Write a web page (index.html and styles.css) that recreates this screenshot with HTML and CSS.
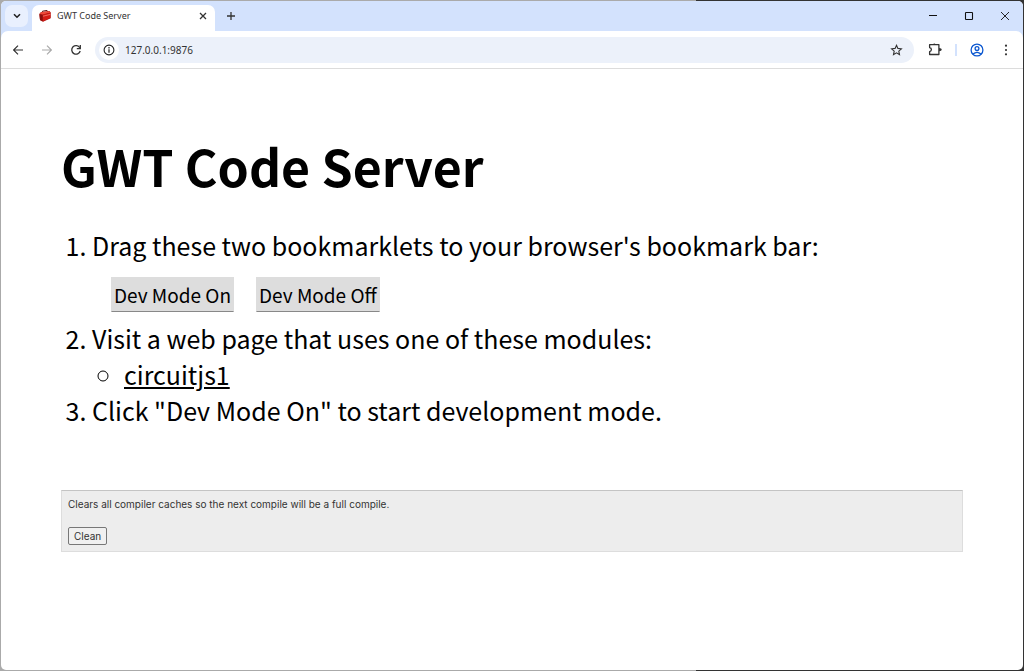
FILE: index.html
```html
<!DOCTYPE html>
<html lang="en">
<head>
<meta charset="utf-8">
<title>GWT Code Server</title>
<link rel="stylesheet" href="styles.css">
</head>
<body>
<div class="window">
  <header class="tab-strip">
    <button class="tab-search" aria-label="Search tabs"><svg width="8" height="6" viewBox="0 0 8 6"><path d="M1 1.2 4 4.2 7 1.2" fill="none" stroke="currentColor" stroke-width="1.6"/></svg></button>
    <div class="tab">
      <svg class="favicon" width="12" height="12" viewBox="0 0 12 12"><path d="M3.5 3V1.2L8 .4 8.6 2" fill="none" stroke="#5a1a18" stroke-width="1"/><path d="M.3 4 2 2 10.5 1l1.2 1.5v5.7L4 11.8 1 10.2z" fill="#a81410"/><path d="M.5 4 2.2 2.3 10.4 1.3l1 1.3-7.6 2z" fill="#ef4a3a"/><path d="M3.8 4.8 11.4 3v4.8l-7.6 3.6z" fill="#d51b14"/><path d="M4 6.2 11.4 4.4" stroke="#f58474" stroke-width=".8"/><path d="M.5 4.3 3.5 5v6L1 9.8z" fill="#8c0e0c"/></svg>
      <span class="tab-title">GWT Code Server</span>
      <button class="icon-button tab-close" aria-label="Close tab"><svg width="8" height="8" viewBox="0 0 8 8"><path d="m1 1 6 6M7 1 1 7" stroke="currentColor" stroke-width="1.3"/></svg></button>
    </div>
    <button class="icon-button new-tab" aria-label="New tab"><svg width="10" height="10" viewBox="0 0 10 10"><path d="M5 1v8M1 5h8" stroke="currentColor" stroke-width="1.3"/></svg></button>
    <div class="window-controls">
      <button class="icon-button" aria-label="Minimize"><svg width="10" height="10" viewBox="0 0 10 10"><path d="M1 4.5h8" stroke="currentColor"/></svg></button>
      <button class="icon-button" aria-label="Maximize"><svg width="10" height="10" viewBox="0 0 10 10"><rect x="1.5" y="1.5" width="7" height="7" rx=".6" fill="none" stroke="currentColor" stroke-width="1.1"/></svg></button>
      <button class="icon-button" aria-label="Close"><svg width="10" height="10" viewBox="0 0 10 10"><path d="m1 1 8 8M9 1 1 9" stroke="currentColor" stroke-width=".9"/></svg></button>
    </div>
  </header>
  <div class="toolbar">
    <button class="icon-button" aria-label="Back"><svg width="12" height="12" viewBox="0 0 12 12"><path d="M11 6H2M6 1.6 1.6 6 6 10.4" fill="none" stroke="currentColor" stroke-width="1.2"/></svg></button>
    <button class="icon-button" aria-label="Forward" disabled><svg width="12" height="12" viewBox="0 0 12 12"><path d="M1 6h9M6 1.6 10.4 6 6 10.4" fill="none" stroke="currentColor" stroke-width="1.2"/></svg></button>
    <button class="icon-button" aria-label="Reload"><svg width="12" height="12" viewBox="0 0 12 12"><path d="M9.8 3.8A4.3 4.3 0 1 0 10.2 7" fill="none" stroke="currentColor" stroke-width="1.3"/><path d="M10.3 1v3.7H6.8" fill="none" stroke="currentColor" stroke-width="1.3"/></svg></button>
    <div class="address-bar">
      <button class="site-info" aria-label="View site information"><svg width="12" height="12" viewBox="0 0 12 12"><circle cx="6" cy="6" r="4.9" fill="none" stroke="currentColor" stroke-width="1.1"/><path d="M6 5.3v3.4M6 3.1v1.3" stroke="currentColor" stroke-width="1.2"/></svg></button>
      <input class="address" type="text" aria-label="Address" value="127.0.0.1:9876">
      <button class="icon-button" aria-label="Bookmark this page"><svg width="13" height="12" viewBox="0 0 13 12"><path d="m6.5 1.3 1.4 3.1 3.5.4-2.6 2.3.7 3.5-3-1.8-3 1.8.7-3.5L1.6 4.8l3.5-.4z" fill="none" stroke="currentColor" stroke-width="1.1"/></svg></button>
    </div>
    <div class="toolbar-actions">
      <button class="icon-button" aria-label="Extensions"><svg width="14" height="13" viewBox="0 0 14 13"><path d="M1.6 1.7H10.900V11.500H1.600V8.700Q3.400 8.300 3.400 6.600T1.600 4.500z" fill="none" stroke="currentColor" stroke-width="1.3" stroke-linejoin="round"/><path d="M4.800 1.500q1.500-1.800 3 0zM11 5q2.800 0 2.800 1.600T11 8.200z" fill="currentColor"/></svg></button>
      <span class="divider"></span>
      <button class="icon-button profile" aria-label="Profile"><svg width="14" height="14" viewBox="0 0 14 14" fill="none" stroke="currentColor" stroke-width="1.3"><circle cx="7" cy="7" r="5.900"/><circle cx="7" cy="5.600" r="1.900"/><path d="M3 11q4-3.400 8 0"/></svg></button>
      <button class="icon-button" aria-label="Menu"><svg width="4" height="12" viewBox="0 0 4 12" fill="currentColor"><circle cx="2" cy="1.700" r="1.100"/><circle cx="2" cy="6" r="1.100"/><circle cx="2" cy="10.300" r="1.100"/></svg></button>
    </div>
  </div>
  <main class="page">
    <h1>GWT Code Server</h1>
    <ol class="steps">
      <li>Drag these two bookmarklets to your browser's bookmark bar:
        <div class="bookmarklets">
          <a class="bookmarklet" href="#">Dev Mode On</a>
          <a class="bookmarklet" href="#">Dev Mode Off</a>
        </div>
      </li>
      <li>Visit a web page that uses one of these modules:
        <ul class="modules"><li><a href="#">circuitjs1</a></li></ul>
      </li>
      <li>Click "Dev Mode On" to start development mode.</li>
    </ol>
    <section class="clean-panel">
      <p>Clears all compiler caches so the next compile will be a full compile.</p>
      <button class="clean-button">Clean</button>
    </section>
  </main>
</div>
</body>
</html>
```
FILE: styles.css
```css
* { box-sizing: border-box; }
body {
  margin: 0;
  background: linear-gradient(90deg, #aaa 68%, #333 68%);
  color: #000;
  font-family: "Noto Sans CJK JP", "Noto Sans", sans-serif;
}
button { border: 0; padding: 0; background: none; color: inherit; font: inherit; }
svg { display: block; }
.window {
  display: flex;
  flex-direction: column;
  min-height: 100vh;
  border: 1px solid transparent;
  border-radius: 6px;
  background: #fff padding-box;
  overflow: hidden;
}
.tab-strip {
  display: flex;
  height: 38px;
  padding: 4px 8px 0 4px;
  background: #d3e2fd;
}
.icon-button { display: flex; align-items: center; justify-content: center; width: 20px; height: 24px; color: #333; }
.tab-search {
  display: flex;
  align-items: center;
  justify-content: center;
  width: 23px;
  height: 22px;
  margin-right: 4px;
  border-radius: 7px;
  background: #e9f0fe;
  color: #222;
}
.tab {
  display: flex;
  align-items: center;
  width: 183px;
  height: 26px;
  padding: 0 2px 4px 7px;
  border-radius: 7px 7px 0 0;
  background: #fff;
}
.tab-title { flex: 1; margin-left: 6px; color: #333; font: 9px/12px "Noto Sans", sans-serif; }
.new-tab { margin-left: 6px; height: 22px; }
.window-controls { display: flex; gap: 16px; height: 22px; margin-left: auto; }
.window-controls .icon-button { height: 22px; color: #111; }
.toolbar {
  display: flex;
  align-items: center;
  height: 38px;
  margin-top: -8px;
  padding: 0 7px 0 7px;
  border-bottom: 1px solid #dcdcdc;
  border-radius: 7px 7px 0 0;
  background: #fff;
}
.toolbar > .icon-button { margin-right: 9px; }
.icon-button:disabled { color: #aaa; }
.address-bar {
  display: flex;
  flex: 1;
  align-items: center;
  height: 26px;
  padding: 0 8px 0 4px;
  border-radius: 13px;
  background: #ecf1fa;
}
.site-info { display: flex; align-items: center; justify-content: center; width: 20px; height: 20px; border-radius: 50%; background: #fff; color: #222; }
.address { flex: 1; min-width: 0; margin-left: 6px; padding: 0; border: 0; outline: 0; background: none; color: #333; font: 10px/16px "Noto Sans", sans-serif; }
.toolbar-actions { display: flex; align-items: center; margin-left: 11px; }
.divider { width: 2px; height: 12px; margin: 0 10px; background: #d3e2fd; }
.profile { color: #0b57d0; margin-right: 9px; }
.page { padding: 60px; }
h1 { margin: 0 0 26px; font-size: 50px; line-height: 72px; font-weight: 700; }
.steps { margin: 0; padding-left: 31px; font-size: 25px; line-height: 36px; }
.bookmarklets { display: flex; gap: 22px; padding: 14px 0 8px 19px; }
.bookmarklet {
  padding: 2px;
  border: 1px solid #ddd;
  border-bottom-color: #888;
  background: #ddd;
  color: #000;
  font-size: 19px;
  line-height: 29px;
  text-decoration: none;
}
.modules { margin: 0; padding-left: 32px; list-style: circle; }
.modules a { color: #000; }
.clean-panel {
  margin-top: 62px;
  padding: 6px;
  border: 1px solid #ddd;
  border-top-color: #c4c4c4;
  background: #ededed;
  color: #333;
  font: 10px/14px Inter, Arial, sans-serif;
}
.clean-panel p { margin: 0 0 16px; }
.clean-button { padding: 1px 5px; border: 1px solid #777; border-radius: 2px; background: #f0f0f0; }
```
